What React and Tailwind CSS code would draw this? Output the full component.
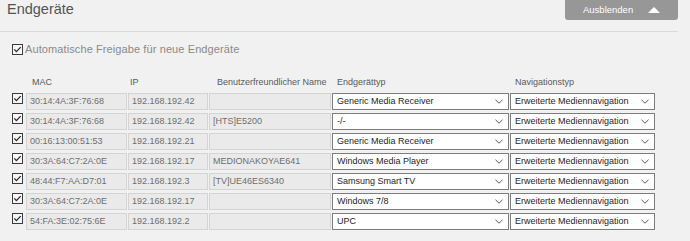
import React from "react";

const rows = [
  ["30:14:4A:3F:76:68", "192.168.192.42", "", "Generic Media Receiver"],
  ["30:14:4A:3F:76:68", "192.168.192.42", "[HTS]E5200", "-/-"],
  ["00:16:13:00:51:53", "192.168.192.21", "", "Generic Media Receiver"],
  ["30:3A:64:C7:2A:0E", "192.168.192.17", "MEDIONAKOYAE641", "Windows Media Player"],
  ["48:44:F7:AA:D7:01", "192.168.192.3", "[TV]UE46ES6340", "Samsung Smart TV"],
  ["30:3A:64:C7:2A:0E", "192.168.192.17", "", "Windows 7/8"],
  ["54:FA:3E:02:75:6E", "192.168.192.2", "", "UPC"],
];

function Check() {
  return (
    <svg width="11" height="11" viewBox="0 0 11 11" className="shrink-0">
      <rect x="0.5" y="0.5" width="10" height="10" fill="#f7f7f7" stroke="#3c3c3c" />
      <path d="M2.3 5.4 L4.4 7.6 L8.7 3.1" fill="none" stroke="#2a2a2a" strokeWidth="1.3" />
    </svg>
  );
}

function Chevron() {
  return (
    <svg width="8" height="5" viewBox="0 0 8 5" className="shrink-0">
      <path d="M0.5 0.8 L4 4.2 L7.5 0.8" fill="none" stroke="#5a5a5a" strokeWidth="1" />
    </svg>
  );
}

function Select({ value, w }) {
  return (
    <div
      className={`${w} h-[17px] bg-white border border-[#7d7d7d] flex items-center justify-between pl-[4px] pr-[5px] text-[9px] text-[#1e1e1e] leading-none`}
    >
      <span>{value}</span>
      <Chevron />
    </div>
  );
}

function Cell({ value, w }) {
  return (
    <div
      className={`${w} h-[17px] bg-[#eaeaea] border border-[#d4d4d4] flex items-center pl-[3px] text-[9px] text-[#6e6e6e] leading-none`}
    >
      {value}
    </div>
  );
}

export default function App() {
  return (
    <div
      className="w-[690px] h-[241px] bg-[#f1f1f1] overflow-hidden"
      style={{ fontFamily: '"Liberation Sans", Arial, sans-serif' }}
    >
      <div className="h-[31px] flex justify-between items-start pr-[12px]">
        <div className="pl-[7px] text-[14.5px] leading-[18px] text-[#545454]">Endgeräte</div>
        <div className="w-[113px] h-[20px] bg-[#979797] rounded-b-[3px] flex items-center pl-[18px] gap-[15px]">
          <span className="text-[9.5px] text-white leading-none">Ausblenden</span>
          <svg width="12" height="6" viewBox="0 0 12 6">
            <path d="M0 6 L6 0 L12 6 Z" fill="#ffffff" />
          </svg>
        </div>
      </div>
      <div className="h-px w-[678px] bg-[#d9d9d9]" />

      <div className="mt-[12px] pl-[12px] flex items-center h-[11px]">
        <Check />
        <span className="ml-[2px] text-[11px] leading-[11px] text-[#8a8a8a] tracking-[0.1px]">
          Automatische Freigabe für neue Endgeräte
        </span>
      </div>

      <div className="mt-[21px] flex h-[12px] items-center text-[9px] leading-[12px] text-[#5a5a5a]">
        <div className="w-[32px]" />
        <div className="w-[98px]">MAC</div>
        <div className="w-[87px]">IP</div>
        <div className="w-[120px]">Benutzerfreundlicher Name</div>
        <div className="w-[178px]">Endgerättyp</div>
        <div>Navigationstyp</div>
      </div>

      <div className="mt-[5px] flex flex-col gap-[3px]">
        {rows.map((r, i) => (
          <div key={i} className="flex items-start pl-[12px]">
            <Check />
            <div className="ml-[3px] flex gap-[1px]">
              <Cell value={r[0]} w="w-[101px]" />
              <Cell value={r[1]} w="w-[80px]" />
              <Cell value={r[2]} w="w-[122px]" />
              <Select value={r[3]} w="w-[177px]" />
              <Select value="Erweiterte Mediennavigation" w="w-[145px]" />
            </div>
          </div>
        ))}
      </div>
    </div>
  );
}
